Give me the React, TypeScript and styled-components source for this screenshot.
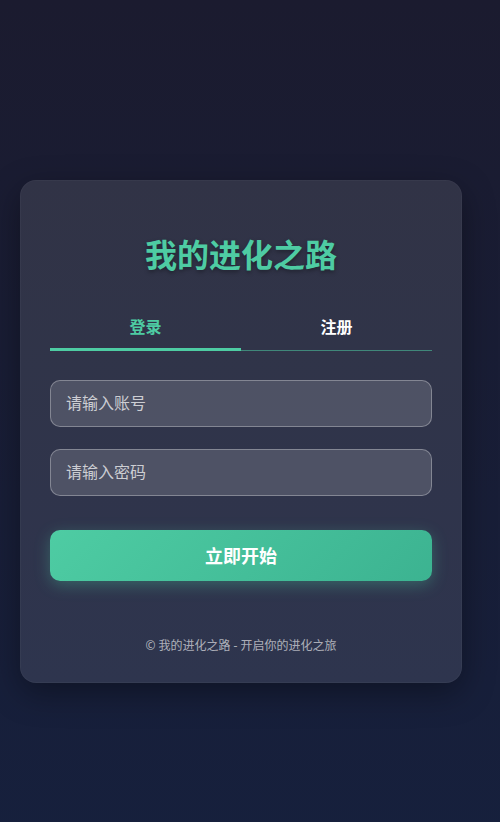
import React, { useState } from "react";
import styled, { createGlobalStyle } from "styled-components";

const GlobalStyle = createGlobalStyle`
  * { box-sizing: border-box; }
  html { margin: 0; }
  body {
    box-sizing: content-box;
    margin: 0;
    padding: 20px 38px 20px 20px;
    min-height: 100vh;
    background: linear-gradient(180deg, #1b1b2f 0%, #16203d 100%);
    font-family: "Noto Sans", "Noto Sans CJK SC", sans-serif;
    display: flex;
    align-items: center;
    justify-content: center;
  }
  #root { width: 100%; display: flex; justify-content: center; }
`;

const Card = styled.div`
  width: 100%;
  max-width: 442px;
  background: rgba(255, 255, 255, 0.1);
  border: 1px solid rgba(255, 255, 255, 0.03);
  border-radius: 16px;
  padding: 29px 29px 27px;
  box-shadow: 0 10px 32px rgba(0, 0, 0, 0.35);
  display: flex;
  flex-direction: column;
`;

const Title = styled.h1`
  margin: 25px 0 0;
  font-size: 32px;
  line-height: 40px;
  font-weight: 700;
  text-align: center;
  color: #4ecca3;
  text-shadow: 0 2px 4px rgba(0, 0, 0, 0.35);
`;

const Tabs = styled.div`
  margin-top: 28px;
  display: flex;
  border-bottom: 1px solid rgba(78, 204, 163, 0.55);
`;

const Tab = styled.button<{ $active: boolean }>`
  flex: 1;
  background: none;
  border: none;
  border-bottom: 3px solid ${(p) => (p.$active ? "#4ecca3" : "transparent")};
  margin-bottom: -1px;
  padding: 12px 0 9px;
  font-family: inherit;
  font-size: 16px;
  line-height: 24px;
  font-weight: 600;
  color: ${(p) => (p.$active ? "#4ecca3" : "#ffffff")};
  cursor: pointer;
`;

const Form = styled.form`
  margin-top: 29px;
  display: flex;
  flex-direction: column;
`;

const Input = styled.input`
  height: 47px;
  width: 100%;
  padding: 0 15px;
  border-radius: 10px;
  border: 1px solid rgba(255, 255, 255, 0.3);
  background: rgba(255, 255, 255, 0.15);
  color: #fff;
  font-family: inherit;
  font-size: 16px;
  outline: none;
  & + & { margin-top: 22px; }
  &::placeholder { color: rgba(255, 255, 255, 0.72); }
`;

const Submit = styled.button`
  margin-top: 34px;
  height: 51px;
  border: none;
  border-radius: 10px;
  background: linear-gradient(135deg, #4ecca3 0%, #3cb391 100%);
  box-shadow: 0 4px 16px rgba(78, 204, 163, 0.32);
  color: #fff;
  font-family: inherit;
  font-size: 18px;
  font-weight: 700;
  cursor: pointer;
`;

const Footer = styled.p`
  margin: 56px 0 0;
  font-size: 12px;
  line-height: 18px;
  text-align: center;
  color: rgba(255, 255, 255, 0.62);
`;

export default function App() {
  const [tab, setTab] = useState<"login" | "register">("login");
  return (
    <>
      <GlobalStyle />
      <Card>
        <Title>我的进化之路</Title>
        <Tabs>
          <Tab $active={tab === "login"} onClick={() => setTab("login")}>登录</Tab>
          <Tab $active={tab === "register"} onClick={() => setTab("register")}>注册</Tab>
        </Tabs>
        <Form onSubmit={(e) => e.preventDefault()}>
          <Input type="text" placeholder="请输入账号" />
          <Input type="password" placeholder="请输入密码" />
          <Submit type="submit">立即开始</Submit>
        </Form>
        <Footer>© 我的进化之路 - 开启你的进化之旅</Footer>
      </Card>
    </>
  );
}
